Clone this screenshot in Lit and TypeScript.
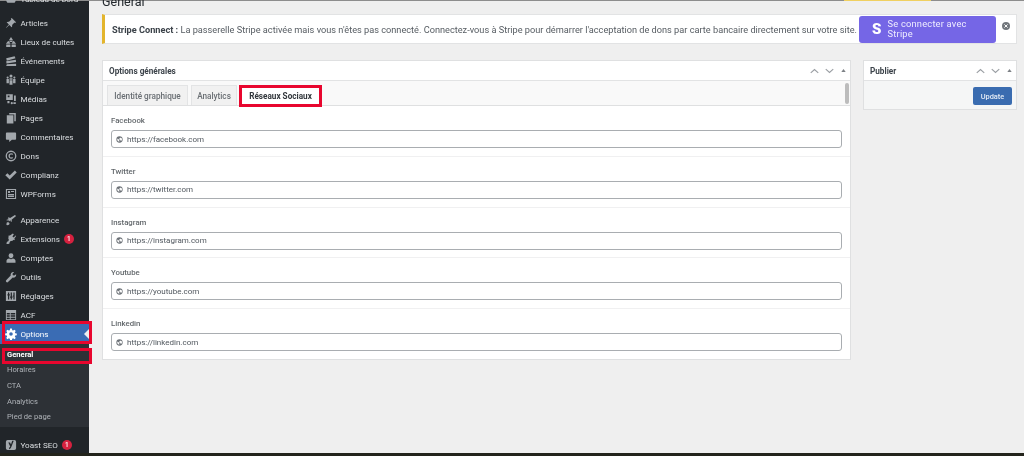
import { LitElement, html, css, svg } from "lit";
import { customElement } from "lit/decorators.js";

const icons: Record<string, any> = {
  dash: svg`<path d="M10 3a8 8 0 018 8c0 2-.7 3.800-2 5.200H4A8 8 0 0110 3z"/>`,
  pin: svg`<path d="M11.2 1.600l7.200 7.200-1.600 1.400-1-.9-4 3.900c.5 1.500.1 3-.8 4L7.200 13.400 2.400 18l-.6-.6 4.700-4.700-3.800-3.800c1-.9 2.600-1.300 4-.8l3.900-4-.9-1z"/>`,
  church: svg`<path d="M10 1.500l3.500 5.500h-7zM5.500 8L9.500 13H1.500zM14.500 8l4 5h-8zM2 14h7v4.500H2zM11 14h7v4.500h-7zM7.500 8h5v2h-5z"/>`,
  events: svg`<path d="M2 5.500l14-3.500 1.500 3.500-14.500 4zM2 10.500l16-2.500.5 3.500-16 2.500zM3 15.500l15.500-1V18.500H2z"/>`,
  team: svg`<path d="M7.500 3.500a2.500 2.500 0 105 0 2.500 2.500 0 10-5 0zM13.800 6a1.800 1.800 0 103.600 0 1.800 1.800 0 10-3.600 0zM2.600 6a1.800 1.800 0 103.600 0 1.800 1.800 0 10-3.600 0zM2.500 8.500h4v7h-4zM7.500 7h5v2.500h-5zM7.500 10.500h5V18h-5zM13.500 8.500h4v7h-4z"/>`,
  media: svg`<path fill-rule="evenodd" d="M2 2h11v9.500H2zm2.500 2.200v2.800h3V4.200zM15 4h3v9.500h-3zM4 13.500h3.500V17H4zM14 15.500h4v3h-4zM9.500 17a1.800 1.800 0 103.600 0 1.800 1.800 0 10-3.600 0z"/>`,
  pages: svg`<path d="M7 1.500h11v14h-2.500V4H7zM3 5.500h11v13.500H3z"/>`,
  comment: svg`<path d="M3 2.500h14a1.500 1.500 0 011.500 1.500v9a1.500 1.500 0 01-1.500 1.500h-5.500L7 18.500v-4H3A1.500 1.500 0 011.500 13V4A1.500 1.500 0 013 2.500z"/>`,
  give: svg`<path fill-rule="evenodd" d="M10 1a9 9 0 110 18 9 9 0 010-18zm0 2.200a6.800 6.800 0 100 13.600 6.800 6.800 0 000-13.600zm.3 2.300c1.300 0 2.400.5 3.200 1.300l-1.400 1.400c-.5-.5-1.100-.7-1.800-.7-1.400 0-2.300 1-2.300 2.500s.9 2.500 2.300 2.500c.7 0 1.300-.2 1.800-.7l1.400 1.400c-.8.800-1.900 1.300-3.200 1.300-2.700 0-4.500-1.900-4.500-4.500s1.800-4.500 4.500-4.500z"/>`,
  check: svg`<path d="M.5 10.500l3.500-3.500 3.800 3.800L16.500 2.500 19.500 5.800 7.800 17.500z"/>`,
  forms: svg`<path fill-rule="evenodd" d="M1.500 1.500h17v17h-17zm1.800 1.800v13.400h13.400V3.300zM5 5h3.500v3.500H5zm5 0h5v1.500h-5zM5 10h10v1.500H5zM5 12.500h10V15H5z"/>`,
  brush: svg`<path d="M18.500 3.500l-2-2-8 5-2.500-1-1.500 1.500 2 1.200L2 10l1.500 1 2.500-.5.5 2L9 10.500l1 3 1.500-1.500-.5-2.500zM3 14c2.500-1 4.500 0 4.500 2s-2 3-5.500 2.500c1.200-1 0-3 1-4.500z"/>`,
  plug: svg`<path d="M13 1l1.800 1.200-2.500 3.600 2.500 1.800 2.500-3.600L18.500 5.200l-3 4.300 1 .8-1.200 1.700-1-.7c-1.200 1.700-3 2.400-5 2L7.500 16c.5 1.800-.5 2.500-5 2.500 0-3 1-4.500 3-4.600l1-2.700c-1.200-1.500-1.300-3.300-.2-5L5.500 5.500l1.200-1.700 1 .7z"/>`,
  user: svg`<path d="M10 2a4 4 0 014 4c0 2-1.500 4.500-4 4.500S6 8 6 6a4 4 0 014-4zM7 11c1.800 1.200 4.200 1.200 6 0 2.500.5 4.500 2 4.500 3.500V18h-15v-3.500C2.500 13 4.500 11.500 7 11z"/>`,
  wrench: svg`<path d="M18.500 5.500c.4 2-.3 3.700-1.600 4.700-1.200.9-2.700 1.100-4 .7L5 18.500c-.7.7-2 .7-2.700 0l-.4-.4c-.7-.7-.7-2 0-2.700L9.500 7.500c-.4-1.400-.1-2.900.9-4 1-1.200 2.700-2 4.600-1.600L12.500 4.500l.5 2.500 2.500.5z"/>`,
  sliders: svg`<path fill-rule="evenodd" d="M1.500 1.500h17v17h-17zM5 4v3H4v2h1v7h2V9h1V7H7V4zm4.500 0v7h-1v2h1v3h2v-3h1v-2h-1V4zM14 4v5h-1v2h1v5h2V4z"/>`,
  table: svg`<path fill-rule="evenodd" d="M1.500 1.500h17v17h-17zm1.500 5V9h5V6.500zm6.500 0V9H17V6.500zM3 10.500V13h5v-2.500zm6.500 0V13H17v-2.500zM3 14.500V17h5v-2.500zm6.500 0V17H17v-2.500z"/>`,
  gear: svg`<path fill-rule="evenodd" d="M8.500 1h3l.5 2.600 1.600.7 2.200-1.500 2.100 2.100-1.500 2.200.7 1.600 2.600.5v3l-2.600.5-.7 1.600 1.500 2.200-2.100 2.100-2.200-1.500-1.600.7-.5 2.600h-3l-.5-2.600-1.600-.7-2.200 1.500-2.100-2.100 1.500-2.200-.7-1.600-2.600-.5v-3l2.600-.5.7-1.600-1.500-2.200 2.100-2.100 2.200 1.500 1.600-.7zM10 7a3 3 0 100 6 3 3 0 000-6z"/>`,
  yoast: svg`<path fill-rule="evenodd" d="M4.500 1.500h11a3 3 0 013 3v11a3 3 0 01-3 3h-11a3 3 0 01-3-3v-11a3 3 0 013-3zM5.500 6l3.200 6.500c-.3.900-.9 1.500-2 2V17c2-.4 3-1.600 3.800-3.500L14.500 3h-2.500l-2 6-1.600-3z"/>`,
  globe: svg`<path fill-rule="evenodd" d="M10 1a9 9 0 100 18 9 9 0 000-18zM3.500 10c0-1 .3-2 .7-2.800L8 10.500v1l1.500 1.500v3.400A6.500 6.500 0 013.500 10zm11.500 4c-.3-.6-.9-1-1.500-1h-1.500v-2a1 1 0 00-1-1H7V8.500h2a1 1 0 001-1V5.500h2a1.500 1.500 0 001.500-1.300A6.500 6.500 0 0115 14z"/>`,
};

const ico = (n: string) => html`<svg class="ico" viewBox="0 0 20 20" fill="currentColor">${icons[n]}</svg>`;

const group1 = [
  ["pin", "Articles"], ["church", "Lieux de cultes"], ["events", "Événements"], ["team", "Équipe"],
  ["media", "Médias"], ["pages", "Pages"], ["comment", "Commentaires"], ["give", "Dons"],
  ["check", "Complianz"], ["forms", "WPForms"],
];
const group2 = [
  ["brush", "Apparence"], ["plug", "Extensions", "1"], ["user", "Comptes"], ["wrench", "Outils"],
  ["sliders", "Réglages"], ["table", "ACF"],
];
const fields = ["facebook", "twitter", "instagram", "youtube", "linkedin"];
const labels = ["Facebook", "Twitter", "Instagram", "Youtube", "Linkedin"];

const arrows = html`<div class="arrows">
  <svg viewBox="0 0 12 8" class="chev"><path d="M1 6.500L6 2l5 4.500" /></svg>
  <svg viewBox="0 0 12 8" class="chev"><path d="M1 1.500L6 6l5-4.500" /></svg>
  <svg viewBox="0 0 8 8" class="tri"><path d="M4 1.500l3.500 5H.5z" /></svg>
</div>`;

@customElement("app-root")
export class AppRoot extends LitElement {
  static styles = css`
    :host { display: block; width: 1024px; height: 456px; overflow: hidden; background: #efefef;
      font-family: Roboto, "Liberation Sans", sans-serif; color: #3c434a; filter: blur(.35px); }
    * { box-sizing: border-box; }
    .top { display: flex; height: 1px; background: #8d8d8d; }
    .top i { display: block; width: 87px; margin-left: 844px; background: #f0d060; }
    .body { display: flex; height: 452px; }
    .bottom { height: 3px; background: #23241c; }

    .side { width: 89px; flex: none; background: #212529; color: #dcdfe2; font-size: 8.100px; }
    .item { display: flex; align-items: center; height: 19px; padding-left: 5px; gap: 3.500px; position: relative; }
    .ico { width: 12px; height: 12px; flex: none; color: #a3a8ad; }
    .first { margin-top: -12px; margin-bottom: 5.500px; }
    .g2 { padding-top: 6.500px; }
    .badge { display: inline-flex; align-items: center; justify-content: center; width: 10px; height: 10px; border-radius: 50%;
      background: #d6213f; color: #fff; font-size: 6.500px; font-weight: 500; margin-left: .500px; }
    .active { background: #3a6cb4; color: #fff; height: 20px; }
    .active .ico { color: #fff; }
    .active::before { content: ""; position: absolute; right: 0; top: 5px; border: 5px solid transparent; border-right-color: #efefef; border-left-width: 0; }
    .mark::after { content: ""; position: absolute; inset: -3px -3px 0 2px; border: 3px solid #e8062e; pointer-events: none; }
    .sub { background: #2d3136; height: 83px; padding-top: 2px; font-size: 7.600px; font-weight: 400; color: #afb3b8; }
    .sub div { height: 15.700px; display: flex; align-items: center; padding-left: 7px; position: relative; }
    .sub .cur { color: #fff; font-weight: 700; height: 16px; }
    .cur.mark::after { inset: 2px -3px -2px 2px; }
    .yoast { margin-top: 8px; }

    .main { flex: 1; min-width: 0; padding: 0 7px 0 13px; }
    h1 { margin: -10px 0 0; height: 22px; font-size: 12.500px; font-weight: 400; line-height: 21px; color: #23282d; }
    .notice { display: flex; align-items: center; height: 30px; margin-top: 1px; background: #fff; border: 1px solid #e2e3e4; border-left: 3px solid #e3b52d;
      font-size: 9.200px; padding-left: 7px; white-space: nowrap; color: #565c62; }
    .notice b { font-weight: 700; color: #3c434a; }
    .notice .msg { width: 747px; flex: none; }
    .stripe { display: flex; align-items: center; width: 137px; height: 27px; border-radius: 3px; background: #7566e6; color: #efedff;
      font-size: 9.300px; line-height: 10px; padding-left: 13px; gap: 6px; white-space: normal; letter-spacing: .2px; flex: none; }
    .stripe strong { font-size: 15px; font-weight: 900; color: #fff; line-height: 1; }
    .stripe span { width: 96px; }
    .close { width: 8px; height: 8px; margin: 0 0 6px 6px; flex: none; }

    .cols { display: flex; gap: 12px; margin-top: 16px; align-items: flex-start; }
    .panel { width: 749px; flex: none; height: 300px; background: #fff; border: 1px solid #dfe0e1; }
    .pub { width: 154px; flex: none; height: 50px; background: #f5f6f6; border: 1px solid #dfe0e1; }
    .head { display: flex; align-items: center; justify-content: space-between; height: 20px; padding: 0 4px 0 6px; background: #fff; border-bottom: 1px solid #e2e3e4;
      font-size: 8.200px; font-weight: 700; color: #3c434a; }
    .arrows { display: flex; align-items: center; gap: 6px; }
    .chev { width: 9px; height: 6px; fill: none; stroke: #9a9ea3; stroke-width: 1.500; }
    .tri { width: 5px; height: 5px; fill: #7d8186; margin-left: 1px; }
    .tabs { position: relative; display: flex; align-items: flex-end; gap: 3px; height: 25px; padding: 5px 0 0 4px; background: #f9f9f9; border-bottom: 1px solid #dfe0e1; }
    .tab { height: 20px; display: flex; align-items: center; justify-content: center; font-size: 8.200px; font-weight: 500; color: #696e73; background: #f1f1f1; border: 1px solid #e3e4e5; border-bottom: none; }
    .t1 { width: 81px; }
    .t2 { width: 46px; }
    .tab.on { width: 81px; background: #fff; color: #32373c; font-weight: 700; position: relative; height: 21px; margin-bottom: -1px; }
    .tab.on::after { content: ""; position: absolute; inset: -1px -2px -1px -2px; border: 3px solid #e8062e; }
    .bar { position: absolute; right: 1px; top: 2px; width: 4px; height: 21px; border-radius: 2px; background: #bcbcbc; }
    .field { height: 50.800px; padding: 8px 8px 0 8px; border-bottom: 1px solid #f0f0f1; }
    .field:last-child { border-bottom: none; }
    .field label { display: block; height: 13px; font-size: 7.800px; font-weight: 500; color: #63686c; line-height: 13px; }
    .input { display: flex; align-items: center; height: 18px; margin-top: 3px; padding-left: 4px; gap: 4px; border: 1px solid #a9adb1; border-radius: 3px; font-size: 8px; color: #50575e; background: #fff; }
    .input svg { width: 7px; height: 7px; fill: #6d7278; flex: none; }
    .foot { display: flex; justify-content: flex-end; padding: 6px 4px 0 0; }
    .btn { display: flex; align-items: center; justify-content: center; width: 39px; height: 18px; border-radius: 2px; background: #3a6cb0; color: #e6edf6; font-size: 7.400px; font-weight: 500; }
  `;

  render() {
    return html`
      <div class="top"><i></i></div>
      <div class="body">
        <nav class="side">
          <div class="item first">${ico("dash")}<span>Tableau de bord</span></div>
          <div>${group1.map(([i, t]) => html`<div class="item">${ico(i)}<span>${t}</span></div>`)}</div>
          <div class="g2">${group2.map(([i, t, b]) => html`<div class="item">${ico(i)}<span>${t}</span>${b ? html`<span class="badge">${b}</span>` : ""}</div>`)}</div>
          <div class="item active mark">${ico("gear")}<span>Options</span></div>
          <div class="sub">
            <div class="cur mark">General</div>
            <div>Horaires</div><div>CTA</div><div>Analytics</div><div>Pied de page</div>
          </div>
          <div class="item yoast">${ico("yoast")}<span>Yoast SEO</span><span class="badge">1</span></div>
        </nav>
        <main class="main">
          <h1>General</h1>
          <div class="notice">
            <div class="msg"><b>Stripe Connect :</b> La passerelle Stripe activée mais vous n'êtes pas connecté. Connectez-vous à Stripe pour démarrer l'acceptation de dons par carte bancaire directement sur votre site.</div>
            <div class="stripe"><strong>S</strong><span>Se connecter avec Stripe</span></div>
            <svg class="close" viewBox="0 0 10 10"><circle cx="5" cy="5" r="5" fill="#72777c"/><path d="M3 3l4 4M7 3L3 7" stroke="#fff" stroke-width="1.200"/></svg>
          </div>
          <div class="cols">
            <section class="panel">
              <div class="head"><span>Options générales</span>${arrows}</div>
              <div class="tabs">
                <div class="tab t1">Identité graphique</div>
                <div class="tab t2">Analytics</div>
                <div class="tab on">Réseaux Sociaux</div>
                <div class="bar"></div>
              </div>
              ${fields.map((f, i) => html`<div class="field"><label>${labels[i]}</label>
                <div class="input"><svg viewBox="0 0 20 20">${icons.globe}</svg><span>https://${f}.com</span></div></div>`)}
            </section>
            <aside class="pub">
              <div class="head"><span>Publier</span>${arrows}</div>
              <div class="foot"><div class="btn">Update</div></div>
            </aside>
          </div>
        </main>
      </div>
      <div class="bottom"></div>
    `;
  }
}
